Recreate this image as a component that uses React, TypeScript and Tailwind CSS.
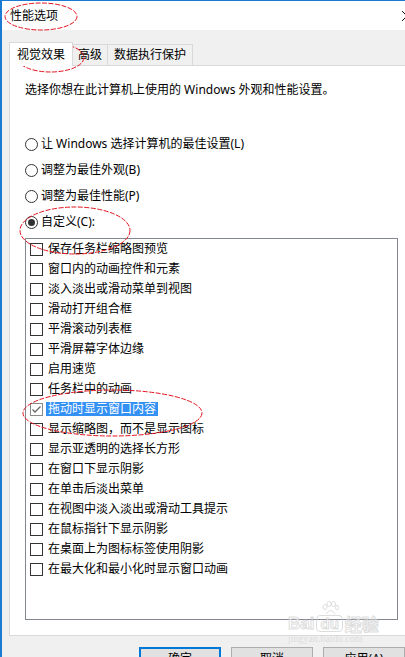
const options = [
  '保存任务栏缩略图预览',
  '窗口内的动画控件和元素',
  '淡入淡出或滑动菜单到视图',
  '滑动打开组合框',
  '平滑滚动列表框',
  '平滑屏幕字体边缘',
  '启用速览',
  '任务栏中的动画',
  '拖动时显示窗口内容',
  '显示缩略图，而不是显示图标',
  '显示亚透明的选择长方形',
  '在窗口下显示阴影',
  '在单击后淡出菜单',
  '在视图中淡入淡出或滑动工具提示',
  '在鼠标指针下显示阴影',
  '在桌面上为图标标签使用阴影',
  '在最大化和最小化时显示窗口动画',
]

const radios = [
  { label: '让 Windows 选择计算机的最佳设置(L)', on: false },
  { label: '调整为最佳外观(B)', on: false },
  { label: '调整为最佳性能(P)', on: false },
  { label: '自定义(C):', on: true },
]

const Radio = ({ on }: { on: boolean }) => (
  <span className="flex items-center justify-center w-[13px] h-[13px] rounded-full border border-[#333] bg-white shrink-0">
    {on && <span className="w-[7px] h-[7px] rounded-full bg-[#333]" />}
  </span>
)

const Check = ({ on }: { on: boolean }) => (
  <span
    className={`flex items-center justify-center w-[13px] h-[13px] border bg-white shrink-0 ${
      on ? 'border-[#8a8a8a]' : 'border-[#333]'
    }`}
  >
    {on && (
      <svg width="11" height="11" viewBox="0 0 11 11">
        <path d="M1.5 5.5 L4 8 L9.5 2.5" fill="none" stroke="#666" strokeWidth="1.3" />
      </svg>
    )}
  </span>
)

const App = () => {
  return (
    <div className="relative w-[405px] h-[657px] overflow-hidden bg-[#f0f0f0] border-t border-l-2 border-[#1b7bd2] text-[12px] text-black font-['Noto_Sans','Noto_Sans_CJK_SC',sans-serif]">
      {/* title bar */}
      <div className="flex items-center justify-between h-[29px] bg-white pl-[8px]">
        <span className="leading-[16px]">性能选项</span>
        <svg width="10" height="10" viewBox="0 0 10 10" className="mr-[-7px]">
          <path d="M0 0 L10 10 M10 0 L0 10" stroke="#111" strokeWidth="1" />
        </svg>
      </div>

      {/* tabs */}
      <div className="flex items-end pt-[11px] pl-[7px] h-[35px]">
        <div className="relative z-10 flex items-center h-[24px] -mb-px px-[7px] bg-white border border-b-0 border-[#d9d9d9] leading-[16px]">
          视觉效果
        </div>
        <div className="flex items-center h-[21px] px-[5px] border border-l-0 border-b-0 border-[#d9d9d9] leading-[16px]">
          高级
        </div>
        <div className="flex items-center h-[21px] px-[6px] border border-l-0 border-b-0 border-[#d9d9d9] leading-[16px]">
          数据执行保护
        </div>
      </div>

      {/* panel */}
      <div className="ml-[7px] w-[420px] h-[571px] bg-white border border-[#d9d9d9] pl-[15px]">
        <p className="pt-[16px] leading-[16px]">选择你想在此计算机上使用的 Windows 外观和性能设置。</p>

        <div className="mt-[33px] flex flex-col">
          {radios.map((r) => (
            <div key={r.label} className="flex items-center gap-[3px] h-[26px]">
              <Radio on={r.on} />
              <span className="leading-[16px]">{r.label}</span>
            </div>
          ))}
        </div>

        <div className="mt-[3px] w-[373px] h-[382px] border border-[#828790] pl-[4px]">
          {options.map((o, i) => {
            const on = i === 8
            return (
              <div key={o} className="flex items-center h-[20px]">
                <Check on={on} />
                <span
                  className={`ml-[3px] px-[2px] h-[14px] leading-[14px] ${
                    on ? 'bg-[#3390f5] text-white' : ''
                  }`}
                >
                  {o}
                </span>
              </div>
            )
          })}
        </div>
      </div>

      {/* buttons */}
      <div className="flex gap-[10px] pl-[137px] mt-[11px]">
        <button className="w-[86px] h-[24px] bg-[#e1e1e1] border-2 border-[#0078d7] leading-[16px]">
          确定
        </button>
        <button className="w-[86px] h-[24px] bg-[#e1e1e1] border border-[#adadad] leading-[16px]">
          取消
        </button>
        <button className="w-[86px] h-[24px] bg-[#e1e1e1] border border-[#adadad] leading-[16px]">
          应用(A)
        </button>
      </div>

      {/* watermark */}
      <div className="absolute left-[286px] top-[600px] flex flex-col items-start opacity-60 pointer-events-none">
        <div className="flex items-end gap-[2px] text-white font-['Liberation_Sans',sans-serif] font-bold">
          <span className="text-[17px] leading-[17px] [-webkit-text-stroke:1px_#c8c8c8]">Bai</span>
          <span className="flex flex-col items-center">
            <svg width="18" height="14" viewBox="0 0 18 14">
              <g fill="none" stroke="#c8c8c8" strokeWidth="1">
                <ellipse cx="4" cy="6" rx="2" ry="2.5" />
                <ellipse cx="8" cy="3" rx="2" ry="2.5" />
                <ellipse cx="12.5" cy="3" rx="2" ry="2.5" />
                <ellipse cx="16" cy="6.5" rx="1.6" ry="2.2" />
                <path d="M5 13 Q10 6 14 13" />
              </g>
            </svg>
            <span className="text-[15px] leading-[15px] px-[3px] rounded-[4px] border border-[#c8c8c8] text-white [-webkit-text-stroke:1px_#c8c8c8]">du</span>
          </span>
          <span className="text-[17px] leading-[17px] font-['Noto_Sans_CJK_SC',sans-serif] [-webkit-text-stroke:1px_#c8c8c8]">经验</span>
        </div>
        <span className="text-[10px] leading-[10px] mt-[2px] text-[#d0d0d0] font-['Liberation_Serif',serif]">jingyan.baidu.com</span>
      </div>

      {/* red annotation ellipses */}
      <svg className="absolute left-0 top-0 pointer-events-none" width="405" height="657" viewBox="0 0 405 657">
        <g fill="none" stroke="#e4141e" strokeWidth="1" strokeDasharray="5 1.5">
          <ellipse cx="39" cy="15.5" rx="36" ry="13.5" />
          <ellipse cx="48.5" cy="56.5" rx="33.5" ry="14.5" />
          <ellipse cx="73" cy="229.5" rx="55" ry="23.5" />
          <ellipse cx="110.5" cy="412" rx="89.5" ry="23" />
        </g>
      </svg>
    </div>
  )
}

export default App
